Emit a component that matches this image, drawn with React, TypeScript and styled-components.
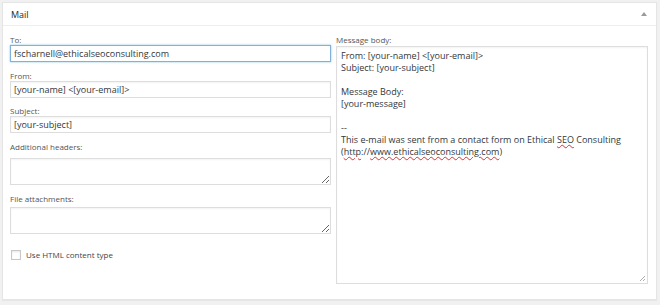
import styled, { createGlobalStyle } from 'styled-components';

const GlobalStyle = createGlobalStyle`
    html, body {
        margin: 0;
        padding: 0;
        background: #f1f1f1;
    }
    body {
        font-family: "Open Sans", "Liberation Sans", sans-serif;
        color: #444;
    }
`;

const Page = styled.div`
    padding: 2px 3px 5px 2px;
`;

const Panel = styled.div`
    background: #fff;
    border: 1px solid #e5e5e5;
    box-shadow: 0 1px 1px rgba(0, 0, 0, 0.04);
    height: 296px;
    display: flex;
    flex-direction: column;
`;

const Header = styled.div`
    height: 22px;
    border-bottom: 1px solid #eee;
    display: flex;
    align-items: center;
    justify-content: space-between;
    padding: 0 9px 0 8px;
`;

const Title = styled.h3`
    margin: 0;
    font-size: 9px;
    font-weight: 400;
    color: #23282d;
`;

const Caret = styled.span`
    width: 0;
    height: 0;
    border-left: 3px solid transparent;
    border-right: 3px solid transparent;
    border-bottom: 4px solid #9a9a9a;
`;

const Body = styled.div`
    flex: 1;
    display: grid;
    grid-template-columns: 321px 312px;
    column-gap: 5px;
    padding: 8px 8px 0 7px;
`;

const Column = styled.div`
    display: flex;
    flex-direction: column;
`;

const Field = styled.div<{ $gap?: number }>`
    display: flex;
    flex-direction: column;
    margin-bottom: ${(p) => p.$gap ?? 8}px;
`;

const Label = styled.label<{ $space?: number }>`
    font-size: 8px;
    line-height: 11px;
    color: #555;
    padding-bottom: ${(p) => p.$space ?? 0}px;
`;

const Input = styled.input<{ $focus?: boolean }>`
    box-sizing: border-box;
    height: 17px;
    width: 100%;
    margin: 0;
    padding: 0 3px;
    font: 9px "Open Sans", "Liberation Sans", sans-serif;
    color: #32373c;
    border: 1px solid ${(p) => (p.$focus ? '#7fb0de' : '#ddd')};
    box-shadow: ${(p) =>
        p.$focus ? '0 0 2px rgba(30, 140, 190, 0.5)' : 'inset 0 1px 2px rgba(0, 0, 0, 0.05)'};
    outline: none;
    background: #fff;
`;

const Area = styled.textarea`
    box-sizing: border-box;
    height: 27px;
    width: 100%;
    margin: 0;
    padding: 2px 3px;
    font: 9px "Open Sans", "Liberation Sans", sans-serif;
    border: 1px solid #ddd;
    box-shadow: inset 0 1px 2px rgba(0, 0, 0, 0.05);
    outline: none;
    resize: vertical;
`;

const CheckRow = styled.label`
    display: flex;
    align-items: center;
    gap: 5px;
    margin-top: 8px;
    padding-left: 1px;
    font-size: 8px;
    line-height: 11px;
    color: #444;
`;

const Box = styled.span`
    box-sizing: border-box;
    width: 10px;
    height: 10px;
    border: 1px solid #c8c8c8;
    box-shadow: inset 0 1px 2px rgba(0, 0, 0, 0.1);
    background: #fff;
`;

const MessageBox = styled.div`
    position: relative;
    box-sizing: border-box;
    height: 238px;
    border: 1px solid #ddd;
    box-shadow: inset 0 1px 2px rgba(0, 0, 0, 0.05);
    padding: 3px 4px;
    font-size: 9px;
    line-height: 12px;
    color: #32373c;
    white-space: pre-wrap;
`;

const Spell = styled.span`
    text-decoration: underline wavy #e03030;
    text-decoration-thickness: 1px;
    text-underline-offset: 1px;
`;

const Grip = styled.svg`
    position: absolute;
    right: 1px;
    bottom: 1px;
`;

export default function App() {
    return (
        <Page>
            <GlobalStyle />
            <Panel>
                <Header>
                    <Title>Mail</Title>
                    <Caret />
                </Header>
                <Body>
                    <Column>
                        <Field>
                            <Label>To:</Label>
                            <Input $focus defaultValue="fscharnell@ethicalseoconsulting.com" />
                        </Field>
                        <Field $gap={7}>
                            <Label>From:</Label>
                            <Input defaultValue="[your-name] <[your-email]>" />
                        </Field>
                        <Field>
                            <Label>Subject:</Label>
                            <Input defaultValue="[your-subject]" />
                        </Field>
                        <Field>
                            <Label $space={6}>Additional headers:</Label>
                            <Area />
                        </Field>
                        <Field $gap={7}>
                            <Label $space={3}>File attachments:</Label>
                            <Area />
                        </Field>
                        <CheckRow>
                            <Box />
                            Use HTML content type
                        </CheckRow>
                    </Column>
                    <Column>
                        <Field>
                            <Label $space={1}>Message body:</Label>
                            <MessageBox>
                                {'From: [your-name] <[your-email]>\nSubject: [your-subject]\n\nMessage Body:\n[your-message]\n\n--\nThis e-mail was sent from a contact form on Ethical '}
                                <Spell>SEO</Spell>
                                {' Consulting\n('}
                                <Spell>http</Spell>
                                {'://'}
                                <Spell>www.ethicalseoconsulting.com</Spell>
                                {')'}
                                <Grip width="7" height="7" viewBox="0 0 7 7">
                                    <path d="M6 1 L1 6 M6 4 L4 6" stroke="#999" strokeWidth="0.8" />
                                </Grip>
                            </MessageBox>
                        </Field>
                    </Column>
                </Body>
            </Panel>
        </Page>
    );
}
